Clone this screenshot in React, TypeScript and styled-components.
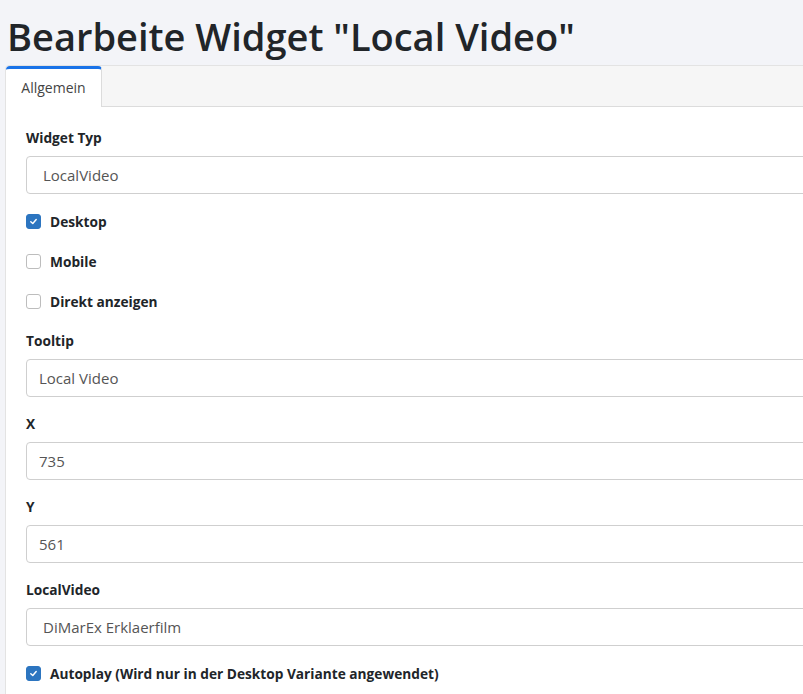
import React from 'react';
import styled, { createGlobalStyle } from 'styled-components';

const GlobalStyle = createGlobalStyle`
  html, body {
    margin: 0;
    padding: 0;
    background: #f3f4f8;
    overflow: hidden;
    font-family: "Open Sans", "Noto Sans", sans-serif;
    color: #212529;
  }
`;

const Page = styled.div`
  width: 1000px;
  padding: 0 0 0 5px;
`;

const Title = styled.h1`
  margin: 0;
  padding: 13px 0 0 2px;
  height: 52px;
  font-size: 38px;
  font-weight: 600;
  line-height: 46px;
  color: #212529;
`;

const Card = styled.div`
  border: 1px solid #e3e3e3;
  border-radius: 4px 4px 0 0;
  background: #fff;
`;

const TabBar = styled.div`
  display: flex;
  height: 40px;
  background: #f6f6f6;
  border-bottom: 1px solid #dcdcdc;
  border-radius: 4px 4px 0 0;
`;

const Tab = styled.div<{ $active?: boolean }>`
  width: 96px;
  box-sizing: border-box;
  display: flex;
  align-items: center;
  justify-content: center;
  font-size: 14px;
  color: #444;
  background: ${p => (p.$active ? '#fff' : 'transparent')};
  border-top: 3px solid ${p => (p.$active ? '#1a73e8' : 'transparent')};
  border-right: 1px solid #dcdcdc;
  border-radius: 4px 4px 0 0;
  margin-bottom: -1px;
  padding-bottom: 2px;
`;

const Body = styled.div`
  padding: 19px 20px 40px 20px;
  display: flex;
  flex-direction: column;
`;

const Label = styled.div`
  font-size: 13.7px;
  font-weight: 700;
  line-height: 18px;
  margin-top: 3px;
  margin-bottom: 9px;
`;

const Field = styled.div<{ $select?: boolean }>`
  height: 38px;
  box-sizing: border-box;
  border: 1px solid #cfcfcf;
  border-radius: 4px;
  display: flex;
  align-items: center;
  padding-left: ${p => (p.$select ? '16px' : '12px')};
  font-size: 15px;
  color: #555;
  margin-bottom: 15px;
`;

const CheckRow = styled.label`
  display: flex;
  align-items: center;
  gap: 9px;
  height: 20px;
  margin: 2px 0 18px 0;
  font-size: 13.7px;
  font-weight: 700;
`;

const Box = styled.span<{ $checked?: boolean }>`
  width: 15px;
  height: 15px;
  box-sizing: border-box;
  border-radius: 3px;
  border: 1px solid ${p => (p.$checked ? '#2c75c0' : '#bdbdbd')};
  background: ${p => (p.$checked ? '#2c75c0' : '#fff')};
  display: flex;
  align-items: center;
  justify-content: center;
`;

const Check = ({ checked, children }: { checked?: boolean; children: React.ReactNode }) => (
  <CheckRow>
    <Box $checked={checked}>
      {checked && (
        <svg width="9" height="9" viewBox="0 0 10 10">
          <path d="M2 5.2 L4.2 7.3 L8 2.8" fill="none" stroke="#fff" strokeWidth="1.6" strokeLinecap="round" strokeLinejoin="round" />
        </svg>
      )}
    </Box>
    {children}
  </CheckRow>
);

export default function App() {
  return (
    <>
      <GlobalStyle />
      <Page>
        <Title>Bearbeite Widget "Local Video"</Title>
        <Card>
          <TabBar>
            <Tab $active>Allgemein</Tab>
          </TabBar>
          <Body>
            <Label>Widget Typ</Label>
            <Field $select>LocalVideo</Field>
            <Check checked>Desktop</Check>
            <Check>Mobile</Check>
            <Check>Direkt anzeigen</Check>
            <Label>Tooltip</Label>
            <Field>Local Video</Field>
            <Label>X</Label>
            <Field>735</Field>
            <Label>Y</Label>
            <Field>561</Field>
            <Label>LocalVideo</Label>
            <Field $select>DiMarEx Erklaerfilm</Field>
            <Check checked>Autoplay (Wird nur in der Desktop Variante angewendet)</Check>
          </Body>
        </Card>
      </Page>
    </>
  );
}
